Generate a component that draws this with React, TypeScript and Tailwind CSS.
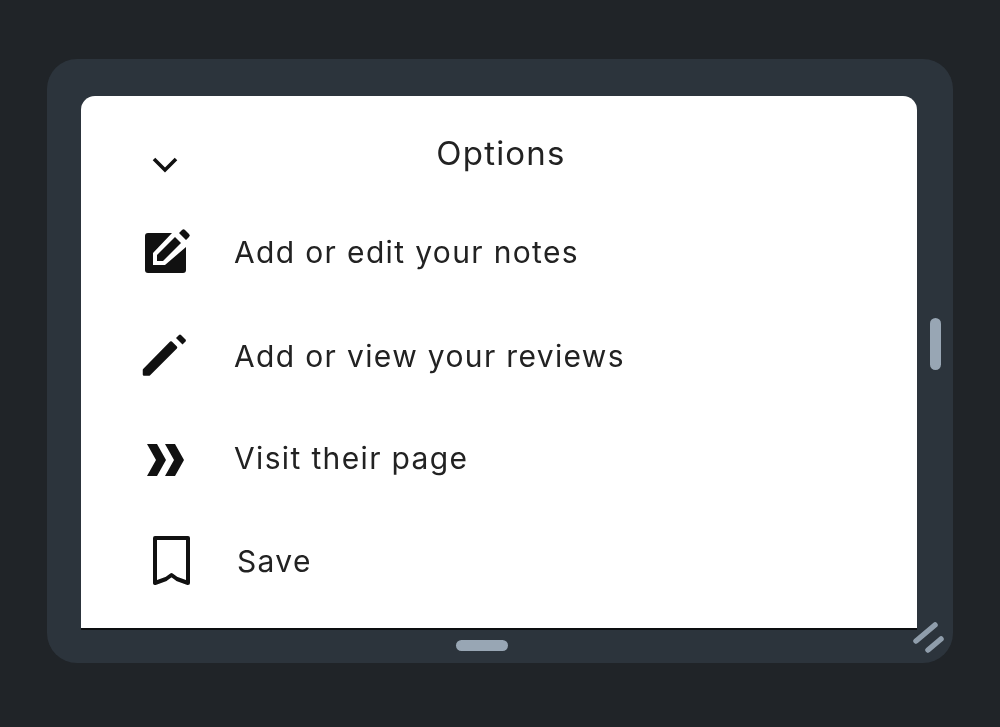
const font = "font-['Inter','Noto_Sans',sans-serif]";

const EditSquareIcon = () => (
  <svg width="50" height="50" viewBox="0 0 50 50" className="shrink-0">
    <rect x="4" y="6" width="41" height="40" rx="3" fill="#111" />
    {/* white notch cut out of the square around the pencil */}
    <path d="M12 38V26L31 6l3-6h16v20h-5L24 38z" fill="#fff" />
    <path d="M16 34v-6l18-18 6 6-18 18z" fill="#111" />
    <path d="M38 6l3-3a2 2 0 0 1 3 0l4 4a2 2 0 0 1 0 3l-3 3z" fill="#111" />
  </svg>
);

const PencilIcon = () => (
  <svg width="50" height="50" viewBox="0 0 50 50" className="shrink-0">
    <path d="M3 39v4.500h5L35 16.500l-5-5z" fill="#111" stroke="#111" strokeWidth="2.500" strokeLinejoin="round" />
    <path d="M35 7l3-3a1.500 1.500 0 0 1 2 0l4.500 4.500a1.500 1.500 0 0 1 0 2l-3 3z" fill="#111" />
  </svg>
);

const DoubleChevronIcon = () => (
  <svg width="50" height="50" viewBox="0 0 50 50" className="shrink-0">
    <path d="M6 11h10l9 16-9 16H6l9-16z" fill="#111" />
    <path d="M24 11h10l9 16-9 16H24l9-16z" fill="#111" />
  </svg>
);

const BookmarkIcon = () => (
  <svg width="50" height="54" viewBox="0 0 50 54" className="shrink-0">
    <path d="M14 4h33v45l-11-4-5.500-4-5.500 4-11 4z" fill="none" stroke="#111" strokeWidth="4" strokeLinejoin="round" />
  </svg>
);

const rows = [
  { icon: <EditSquareIcon />, label: "Add or edit your notes", height: "h-[104px]", gap: "ml-[43px]" },
  { icon: <PencilIcon />, label: "Add or view your reviews", height: "h-[104px]", gap: "ml-[43px]" },
  { icon: <DoubleChevronIcon />, label: "Visit their page", height: "h-[100px]", gap: "ml-[43px]" },
  { icon: <BookmarkIcon />, label: "Save", height: "h-[106px]", gap: "ml-[46px]" },
];

export default function App() {
  return (
    <div className="h-[727px] w-[1000px] overflow-hidden bg-[#202428] pl-[47px] pt-[59px]">
      <div className="relative h-[604px] w-[906px] rounded-[30px] bg-[#2c343c] pb-[33px] pl-[34px] pr-[36px] pt-[37px]">
        <div className={`h-full overflow-hidden rounded-t-[14px] border-b-2 border-[#0c0e10] bg-white text-[#222] blur-[0.4px] ${font}`}>
          <div className="grid h-[104px] grid-cols-[1fr_auto_1fr]">
            <div className="pl-[70px] pt-[60px]">
              <svg width="28" height="20" viewBox="0 0 28 20">
                <path d="M3 3l11 11L25 3" fill="none" stroke="#111" strokeWidth="3.600" />
              </svg>
            </div>
            <div className="ml-[4px] pt-[35px] text-[33px] leading-[44px] tracking-[1.2px]">Options</div>
            <div />
          </div>
          {rows.map((row) => (
            <div key={row.label} className={`flex items-center pl-[60px] ${row.height}`}>
              {row.icon}
              <span className={`text-[30px] leading-[40px] tracking-[1.35px] ${row.gap}`}>{row.label}</span>
            </div>
          ))}
        </div>
        {/* resize handles sit on the frame */}
        <div className="absolute right-[12px] top-[259px] h-[52px] w-[11px] rounded-full bg-[#98a6b4]" />
        <div className="absolute bottom-[12px] left-[409px] h-[11px] w-[52px] rounded-full bg-[#98a6b4]" />
        <svg width="40" height="40" viewBox="0 0 40 40" className="absolute bottom-[6px] right-[5px]">
          <path d="M8 24L27 8M20 33l13-11" stroke="#8f9dab" strokeWidth="5.500" strokeLinecap="round" />
        </svg>
      </div>
    </div>
  );
}
